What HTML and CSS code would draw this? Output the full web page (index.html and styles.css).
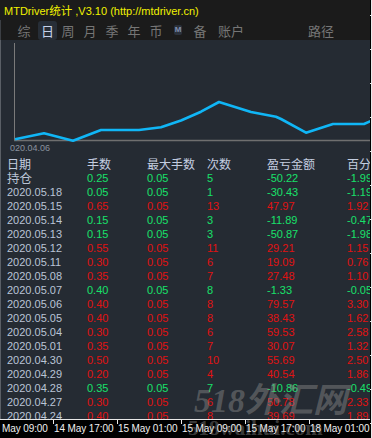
FILE: index.html
```html
<!DOCTYPE html>
<html>
<head>
<meta charset="utf-8">
<link rel="stylesheet" href="styles.css">
</head>
<body>
<div class="screen">
  <div class="main">
    <div class="titlebar">MTDriver<span class="cjk">统计</span> ,V3.10 (http://mtdriver.cn)</div>
    <div class="tabs">
      <span class="tab">综</span>
      <span class="tab"><span class="active">日</span></span>
      <span class="tab">周</span>
      <span class="tab">月</span>
      <span class="tab">季</span>
      <span class="tab">年</span>
      <span class="tab">币</span>
      <span class="tab"><span class="micon">M</span></span>
      <span class="tab">备</span>
      <span class="tab wide">账户</span>
      <span class="tab path">路径</span>
    </div>
    <div class="panel">
      <div class="chart">
        <svg width="369" height="117" viewBox="0 0 369 117">
          <line x1="13.5" y1="3" x2="13.5" y2="100" stroke="#7a7a7a" stroke-width="1"/>
          <line x1="13" y1="100.5" x2="369" y2="100.5" stroke="#6f6f6f" stroke-width="1.5"/>
          <polyline fill="none" stroke="#10b6f6" stroke-width="2.6" stroke-linejoin="round"
            points="14,99.3 43,93.3 72,100.7 100,90 138,90 160,87.3 180,80.5 200,71.7 218,62 250,72 275,76.7 280,79 305,92.7 332,84 363,84 370,81"/>
          <text x="9" y="111" class="datelbl">020.04.06</text>
        </svg>
      </div>
      <div class="table">
        <div class="row head"><span>日期</span><span>手数</span><span>最大手数</span><span>次数</span><span>盈亏金额</span><span>百分比</span></div>
        <div class="row g"><span class="d cj">持仓</span><span>0.25</span><span>0.05</span><span>5</span><span>-50.22</span><span>-1.99</span></div>
        <div class="row g"><span class="d">2020.05.18</span><span>0.05</span><span>0.05</span><span>1</span><span>-30.43</span><span>-1.19</span></div>
        <div class="row r"><span class="d">2020.05.15</span><span>0.65</span><span>0.05</span><span>13</span><span>47.97</span><span>1.92</span></div>
        <div class="row g"><span class="d">2020.05.14</span><span>0.15</span><span>0.05</span><span>3</span><span>-11.89</span><span>-0.47</span></div>
        <div class="row g"><span class="d">2020.05.13</span><span>0.15</span><span>0.05</span><span>3</span><span>-50.87</span><span>-1.98</span></div>
        <div class="row r"><span class="d">2020.05.12</span><span>0.55</span><span>0.05</span><span>11</span><span>29.21</span><span>1.15</span></div>
        <div class="row r"><span class="d">2020.05.11</span><span>0.30</span><span>0.05</span><span>6</span><span>19.09</span><span>0.76</span></div>
        <div class="row r"><span class="d">2020.05.08</span><span>0.35</span><span>0.05</span><span>7</span><span>27.48</span><span>1.10</span></div>
        <div class="row g"><span class="d">2020.05.07</span><span>0.40</span><span>0.05</span><span>8</span><span>-1.33</span><span>-0.05</span></div>
        <div class="row r"><span class="d">2020.05.06</span><span>0.40</span><span>0.05</span><span>8</span><span>79.57</span><span>3.30</span></div>
        <div class="row r"><span class="d">2020.05.05</span><span>0.40</span><span>0.05</span><span>8</span><span>38.43</span><span>1.62</span></div>
        <div class="row r"><span class="d">2020.05.04</span><span>0.30</span><span>0.05</span><span>6</span><span>59.53</span><span>2.58</span></div>
        <div class="row r"><span class="d">2020.05.01</span><span>0.35</span><span>0.05</span><span>7</span><span>30.07</span><span>1.32</span></div>
        <div class="row r"><span class="d">2020.04.30</span><span>0.50</span><span>0.05</span><span>10</span><span>55.69</span><span>2.50</span></div>
        <div class="row r"><span class="d">2020.04.29</span><span>0.20</span><span>0.05</span><span>4</span><span>40.54</span><span>1.86</span></div>
        <div class="row g"><span class="d">2020.04.28</span><span>0.35</span><span>0.05</span><span>7</span><span>-10.86</span><span>-0.49</span></div>
        <div class="row r"><span class="d">2020.04.27</span><span>0.30</span><span>0.05</span><span>6</span><span>50.78</span><span>2.33</span></div>
        <div class="row r"><span class="d">2020.04.24</span><span>0.40</span><span>0.05</span><span>8</span><span>39.69</span><span>1.89</span></div>
      </div>
    </div>
    <div class="axis">
      <span class="lbl first">May 09:00</span>
      <span class="lbl">14 May 17:00</span>
      <span class="lbl">15 May 01:00</span>
      <span class="lbl">15 May 09:00</span>
      <span class="lbl">15 May 17:00</span>
      <span class="lbl">18 May 01:00</span>
    </div>
  </div>
  <div class="edge"></div>
  <div class="watermark">
    <div class="wm1">518外汇网</div>
    <div class="wm2">518waihui.com</div>
  </div>
</div>
</body>
</html>
```

FILE: styles.css
```css
* { box-sizing: border-box; }
html, body { margin: 0; padding: 0; background: #000; }
body { width: 372px; height: 438px; overflow: hidden; }

.screen {
  position: relative;
  display: flex;
  width: 372px;
  height: 438px;
  overflow: hidden;
  font-family: "Liberation Sans", Arial, "Noto Sans CJK SC", sans-serif;
}

.main {
  width: 370px;
  height: 438px;
  display: flex;
  flex-direction: column;
}

.titlebar {
  height: 20px;
  line-height: 20px;
  padding-left: 4px;
  background: #1b1b1b;
  color: #f2f200;
  font-size: 11px;
  white-space: nowrap;
}
.titlebar .cjk {
  font-family: "Noto Sans CJK SC", sans-serif;
  font-size: 11.5px;
}

.tabs {
  height: 20px;
  background: #1b1b1b;
  display: flex;
  align-items: center;
  padding-left: 12px;
  border-left: 1px solid #3c3f44;
  font-family: "Noto Sans CJK SC", sans-serif;
  font-size: 13px;
  color: #767676;
}
.tab {
  width: 22px;
  height: 20px;
  display: flex;
  align-items: center;
  justify-content: center;
  line-height: 1;
}
.tab.wide { width: 40px; }
.tab.path { margin-left: 55px; width: 30px; }
.active {
  background: #272e37;
  color: #c6d2ea;
  padding: 3px 3px;
  border-radius: 3px;
  margin-left: 3px;
}
.micon {
  font-family: "Liberation Sans", sans-serif;
  font-size: 8px;
  font-weight: bold;
  color: #8090b0;
  background: #2b313b;
  padding: 1px 1px;
  border-radius: 2px;
}

.panel {
  flex: 1;
  min-height: 0;
  background: #252b33;
  border-left: 1px solid #5a5f66;
  display: flex;
  flex-direction: column;
  overflow: hidden;
}
.chart { height: 117px; flex: none; }
.chart svg { display: block; }
.datelbl {
  font-family: "Liberation Sans", sans-serif;
  font-size: 9px;
  fill: #8a929e;
}

.table {
  flex: 1;
  overflow: hidden;
  padding-left: 6px;
}
.row {
  display: grid;
  grid-template-columns: 80px 60px 60px 60px 80px 40px;
  height: 14px;
  line-height: 14px;
  font-size: 11px;
  white-space: nowrap;
}
.row.head {
  height: 14px;
  line-height: 14px;
  font-family: "Noto Sans CJK SC", sans-serif;
  font-size: 12px;
  color: #c4cee0;
}
.row .cj { font-family: "Noto Sans CJK SC", sans-serif; font-size: 12.5px; }
.row.g span { color: #18e06a; }
.row.r span { color: #e01212; }
.row.g .d, .row.r .d { color: #bac4d6; }

.axis {
  height: 19px;
  flex: none;
  background: #000;
  border-top: 1px solid #e8e8e8;
  display: flex;
  padding-left: 2px;
}
.lbl {
  flex: none;
  color: #f0f0f0;
  font-size: 10px;
  line-height: 16px;
  white-space: nowrap;
  width: 64px;
  position: relative;
  padding-top: 1px;
  letter-spacing: -0.1px;
}
.lbl.first { width: 51px; }
.lbl:not(.first) { padding-left: 1px; }
.lbl:not(.first)::before {
  content: "";
  position: absolute;
  left: 0;
  top: 0;
  width: 1px;
  height: 4px;
  background: #e8e8e8;
}

.edge {
  width: 2px;
  height: 438px;
  flex: none;
  border-right: 1px solid #eaeaea;
  background:
    repeating-linear-gradient(to bottom, transparent 0, transparent 15px, #eaeaea 15px, #eaeaea 16px, transparent 16px, transparent 34px);
}

.watermark {
  position: absolute;
  left: 188px;
  top: 382px;
  width: 182px;
  height: 56px;
  overflow: hidden;
  pointer-events: none;
}
.wm1 {
  font-family: "Liberation Serif", "Noto Sans CJK SC", serif;
  font-style: italic;
  font-weight: bold;
  font-size: 34px;
  color: rgba(140, 140, 140, 0.45);
  line-height: 38px;
  padding-left: 6px;
  white-space: nowrap;
}
.wm2 {
  font-family: "Liberation Serif", serif;
  font-weight: bold;
  font-size: 21px;
  color: rgba(200, 200, 200, 0.3);
  line-height: 20px;
  margin-top: -2px;
  white-space: nowrap;
}
```
